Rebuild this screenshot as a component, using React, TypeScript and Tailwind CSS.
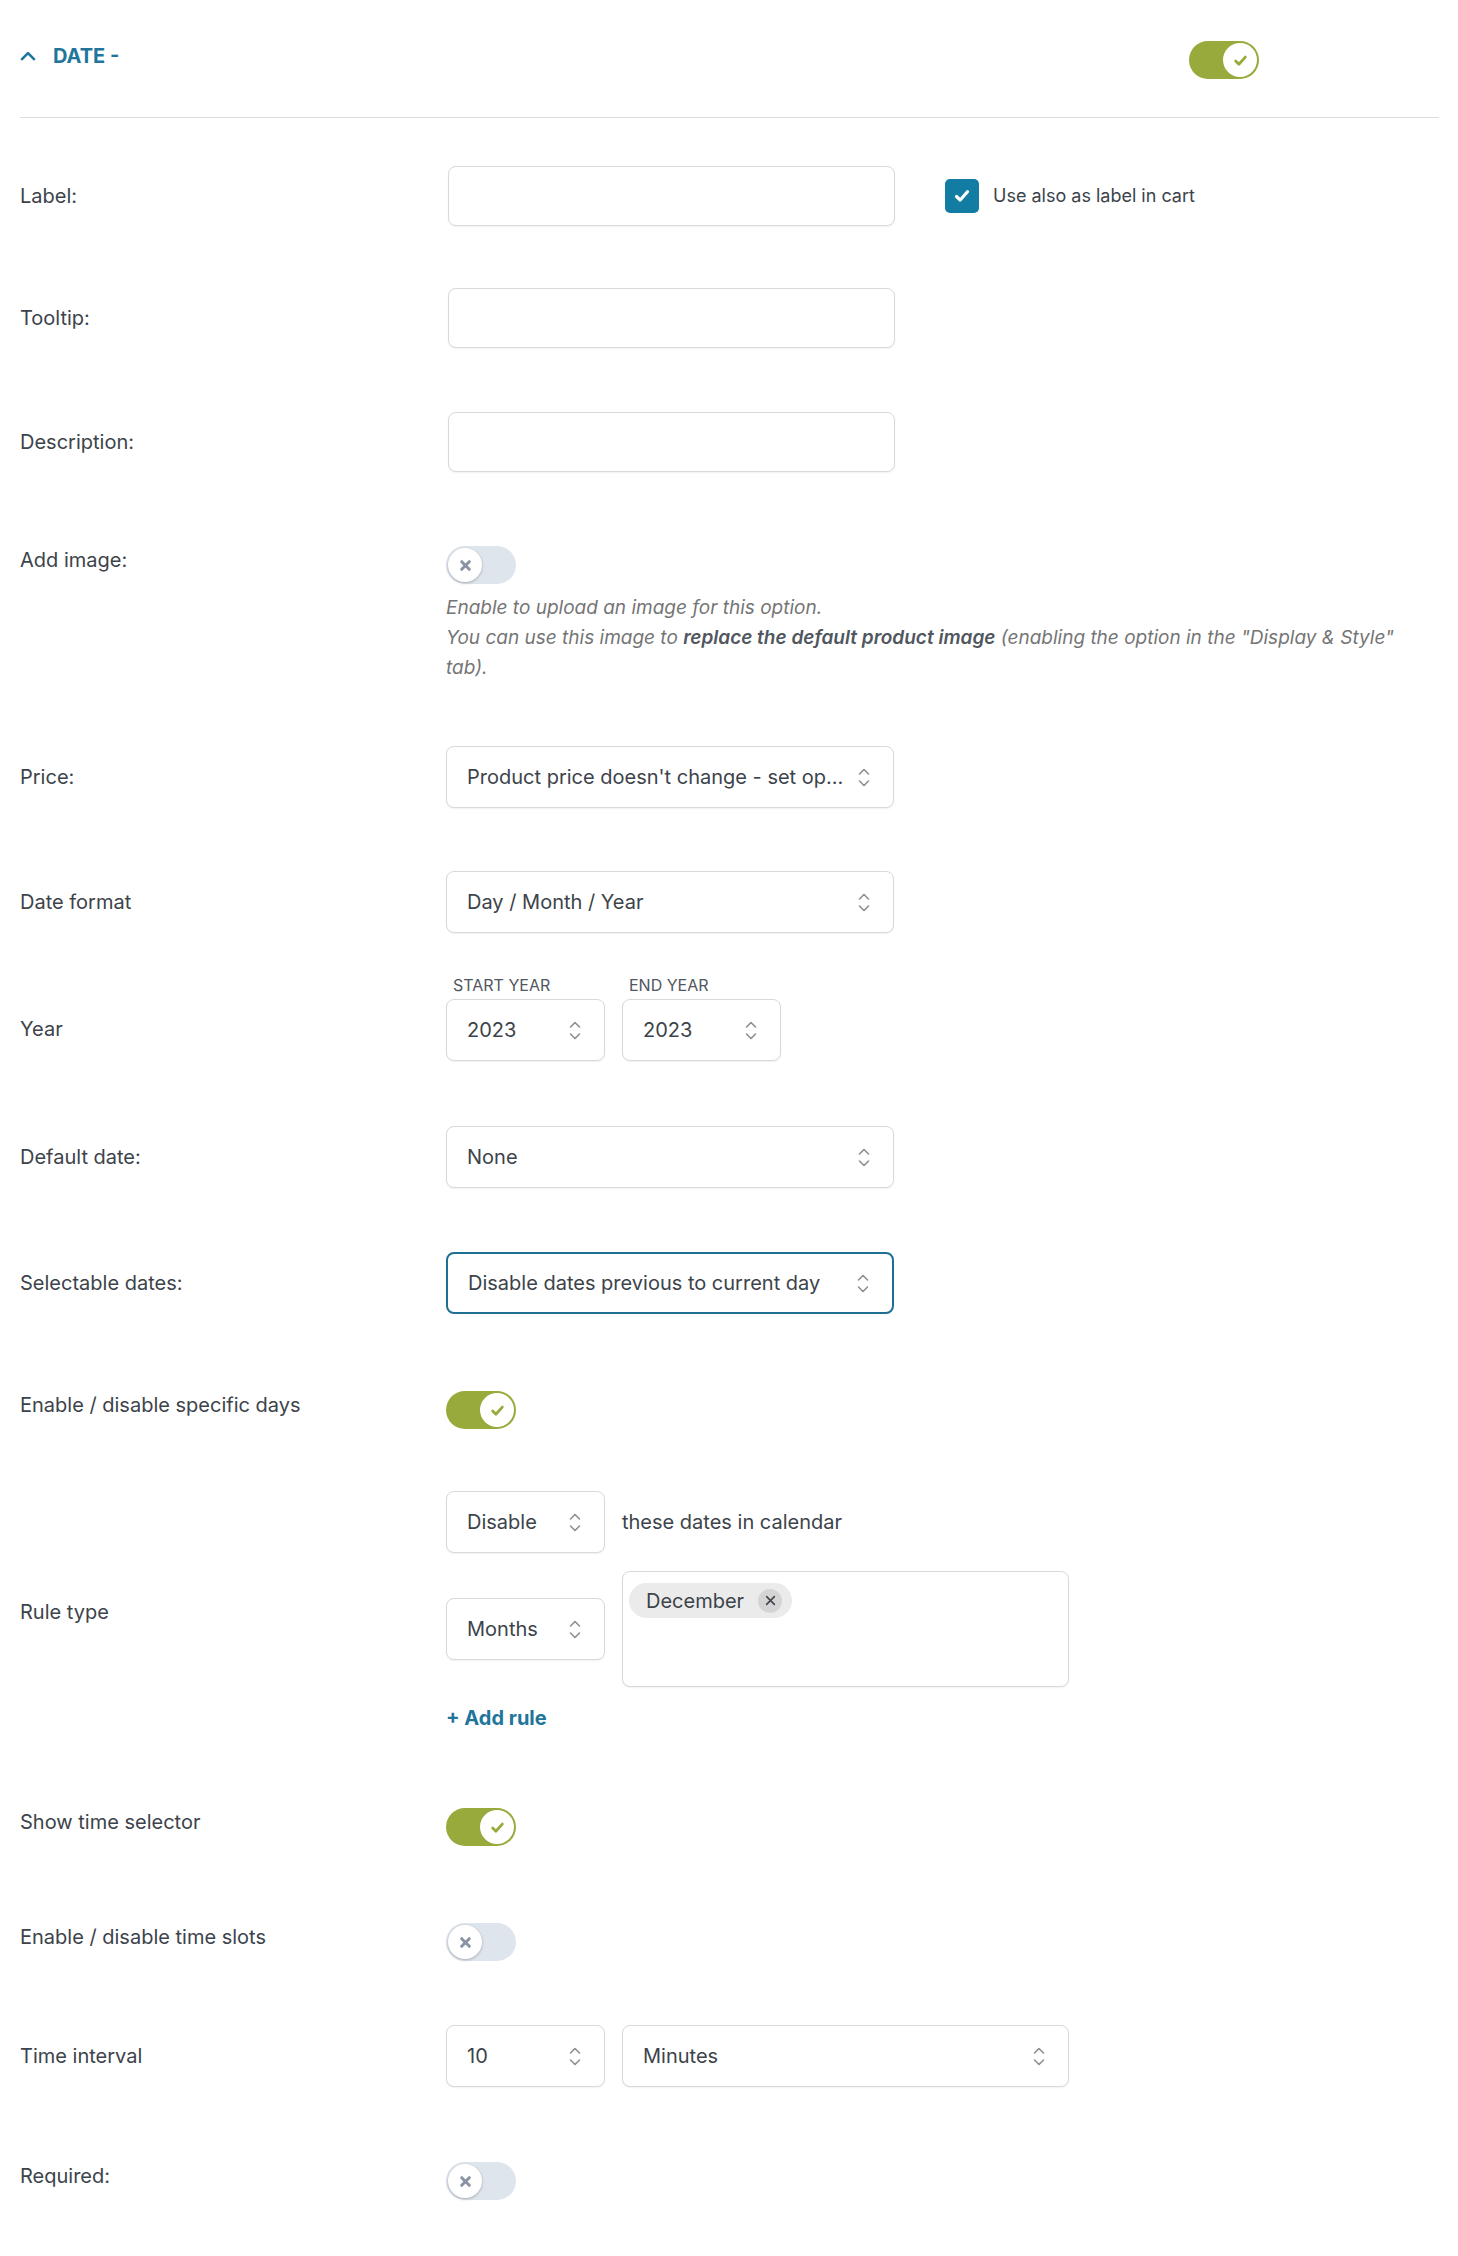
import React from 'react';

const font = "font-['Inter','Noto_Sans',sans-serif]";

const UpDown = () => (
    <svg width="14" height="21" viewBox="0 0 14 21" fill="none" stroke="#8c8f94" strokeWidth="1.6"
         strokeLinecap="round" strokeLinejoin="round" className="shrink-0">
        <path d="M2.5 7 7 2.5 11.5 7" />
        <path d="M2.5 14 7 18.5 11.5 14" />
    </svg>
);

interface SelectProps {
    value: string;
    width?: string;
    focused?: boolean;
}

const Select = ({ value, width = 'w-[448px]', focused = false }: SelectProps) => {
    return (
        <div
            className={`${width} flex h-[62px] shrink-0 items-center justify-between gap-[8px] rounded-[8px] bg-white pl-[20px] pr-[22px] ${
                focused
                    ? 'border-2 border-[#1f6f94]'
                    : 'border border-[#d6d9de] shadow-[0_1px_2px_rgba(0,0,0,0.06)]'
            }`}>
            <span className="whitespace-nowrap text-[20px] leading-[28px] text-[#3c434a]">{value}</span>
            <UpDown />
        </div>
    );
};

const TextInput = () => (
    <div className="ml-[2px] h-[60px] w-[447px] shrink-0 rounded-[8px] border border-[#d6d9de] bg-white shadow-[0_1px_2px_rgba(0,0,0,0.06)]" />
);

const Toggle = ({ on }: { on: boolean }) => {
    if (on) {
        return (
            <div className="flex h-[38px] w-[70px] shrink-0 items-center justify-end rounded-full bg-[#98aa3b] p-[2px]">
                <div className="flex h-[34px] w-[34px] items-center justify-center rounded-full bg-white">
                    <svg width="15" height="15" viewBox="0 0 14 14" fill="none" stroke="#98aa3b" strokeWidth="2.6"
                         strokeLinecap="round" strokeLinejoin="round">
                        <path d="M2.5 7.5 5.5 10.5 11.5 3.8" />
                    </svg>
                </div>
            </div>
        );
    }
    return (
        <div className="flex h-[38px] w-[70px] shrink-0 items-center rounded-full bg-[#dfe5ed] p-[2px]">
            <div className="flex h-[34px] w-[34px] items-center justify-center rounded-full bg-white shadow-[0_1px_3px_rgba(0,0,0,0.25)]">
                <svg width="13" height="13" viewBox="0 0 12 12" fill="none" stroke="#8a93a3" strokeWidth="2.8"
                     strokeLinecap="round">
                    <path d="M2.5 2.5 9.5 9.5M9.5 2.5 2.5 9.5" />
                </svg>
            </div>
        </div>
    );
};

const Label = ({ children, className = '' }: { children: React.ReactNode; className?: string }) => (
    <div className={`w-[426px] shrink-0 text-[20px] leading-[28px] text-[#3c434a] ${className}`}>{children}</div>
);

export default function App() {
    return (
        <div className={`min-h-[2256px] bg-white ${font}`}>
            <div className="pb-[55px] pl-[20px] pr-[19px] pt-[41px]">
                {/* header */}
                <div className="flex items-start justify-between border-b border-[#dcdcde] pb-[38px]">
                    <div className="flex h-[29px] items-center gap-[17px] text-[#21759b]">
                        <svg width="16" height="10" viewBox="0 0 16 10" fill="none" stroke="currentColor" strokeWidth="2.6"
                             strokeLinecap="round" strokeLinejoin="round">
                            <path d="M2 8.2 8 2.2 14 8.2" />
                        </svg>
                        <span className="text-[20px] font-bold leading-[28px]">DATE -</span>
                    </div>
                    <div className="mr-[180px]">
                        <Toggle on />
                    </div>
                </div>

                {/* label */}
                <div className="mt-[48px] flex items-center">
                    <Label>Label:</Label>
                    <TextInput />
                    <div className="ml-[50px] flex items-center gap-[14px]">
                        <div className="flex h-[34px] w-[34px] items-center justify-center rounded-[5px] bg-[#137ca3]">
                            <svg width="18" height="18" viewBox="0 0 18 18" fill="none" stroke="white" strokeWidth="3.2"
                                 strokeLinecap="round" strokeLinejoin="round">
                                <path d="M3.5 9.5 7.2 13 14.5 4.8" />
                            </svg>
                        </div>
                        <span className="text-[18px] leading-[26px] text-[#3c434a]">Use also as label in cart</span>
                    </div>
                </div>

                <div className="mt-[62px] flex items-center">
                    <Label>Tooltip:</Label>
                    <TextInput />
                </div>

                <div className="mt-[64px] flex items-center">
                    <Label>Description:</Label>
                    <TextInput />
                </div>

                {/* add image */}
                <div className="mt-[74px] flex items-start">
                    <Label>Add image:</Label>
                    <div className="flex flex-col">
                        <Toggle on={false} />
                        <div className="mt-[9px] whitespace-nowrap text-[19px] italic leading-[30px] text-[#757575]">
                            <div>Enable to upload an image for this option.</div>
                            <div>
                                You can use this image to{' '}
                                <span className="font-semibold text-[#50575e]">replace the default product image</span>{' '}
                                (enabling the option in the "Display &amp; Style"
                            </div>
                            <div>tab).</div>
                        </div>
                    </div>
                </div>

                <div className="mt-[63px] flex items-center">
                    <Label>Price:</Label>
                    <Select value="Product price doesn't change - set op..." />
                </div>

                <div className="mt-[63px] flex items-center">
                    <Label>Date format</Label>
                    <Select value="Day / Month / Year" />
                </div>

                {/* year */}
                <div className="mt-[43px] flex items-start">
                    <Label className="mt-[39px]">Year</Label>
                    <div className="flex gap-[17px]">
                        <div className="flex flex-col">
                            <span className="pl-[7px] text-[16px] leading-[18px] text-[#50575e]">START YEAR</span>
                            <div className="mt-[5px]">
                                <Select value="2023" width="w-[159px]" />
                            </div>
                        </div>
                        <div className="flex flex-col">
                            <span className="pl-[7px] text-[16px] leading-[18px] text-[#50575e]">END YEAR</span>
                            <div className="mt-[5px]">
                                <Select value="2023" width="w-[159px]" />
                            </div>
                        </div>
                    </div>
                </div>

                <div className="mt-[65px] flex items-center">
                    <Label>Default date:</Label>
                    <Select value="None" />
                </div>

                <div className="mt-[64px] flex items-center">
                    <Label>Selectable dates:</Label>
                    <Select value="Disable dates previous to current day" focused />
                </div>

                <div className="mt-[77px] flex items-start">
                    <Label>Enable / disable specific days</Label>
                    <Toggle on />
                </div>

                {/* rules */}
                <div className="mt-[62px] flex items-center">
                    <Label>Rule type</Label>
                    <div className="flex flex-col">
                        <div className="flex items-center gap-[17px]">
                            <Select value="Disable" width="w-[159px]" />
                            <span className="text-[20px] leading-[28px] text-[#3c434a]">these dates in calendar</span>
                        </div>
                        <div className="mt-[18px] flex items-center gap-[17px]">
                            <Select value="Months" width="w-[159px]" />
                            <div className="h-[116px] w-[447px] rounded-[8px] border border-[#d6d9de] bg-white pl-[6px] pt-[11px] shadow-[0_1px_2px_rgba(0,0,0,0.06)]">
                                <div className="inline-flex h-[35px] items-center gap-[14px] rounded-full bg-[#ebebeb] pl-[17px] pr-[10px]">
                                    <span className="text-[20px] leading-[28px] text-[#3c434a]">December</span>
                                    <span className="flex h-[24px] w-[24px] items-center justify-center rounded-full bg-[#d4d4d4]">
                                        <svg width="11" height="11" viewBox="0 0 10 10" fill="none" stroke="#3c434a"
                                             strokeWidth="1.4" strokeLinecap="round">
                                            <path d="M1.5 1.5 8.5 8.5M8.5 1.5 1.5 8.5" />
                                        </svg>
                                    </span>
                                </div>
                            </div>
                        </div>
                        <span className="mt-[17px] text-[20px] font-bold leading-[28px] text-[#21759b]">+ Add rule</span>
                    </div>
                </div>

                <div className="mt-[76px] flex items-start">
                    <Label>Show time selector</Label>
                    <Toggle on />
                </div>

                <div className="mt-[77px] flex items-start">
                    <Label>Enable / disable time slots</Label>
                    <Toggle on={false} />
                </div>

                <div className="mt-[64px] flex items-center">
                    <Label>Time interval</Label>
                    <div className="flex gap-[17px]">
                        <Select value="10" width="w-[159px]" />
                        <Select value="Minutes" width="w-[447px]" />
                    </div>
                </div>

                <div className="mt-[75px] flex items-start">
                    <Label>Required:</Label>
                    <Toggle on={false} />
                </div>
            </div>
        </div>
    );
}
